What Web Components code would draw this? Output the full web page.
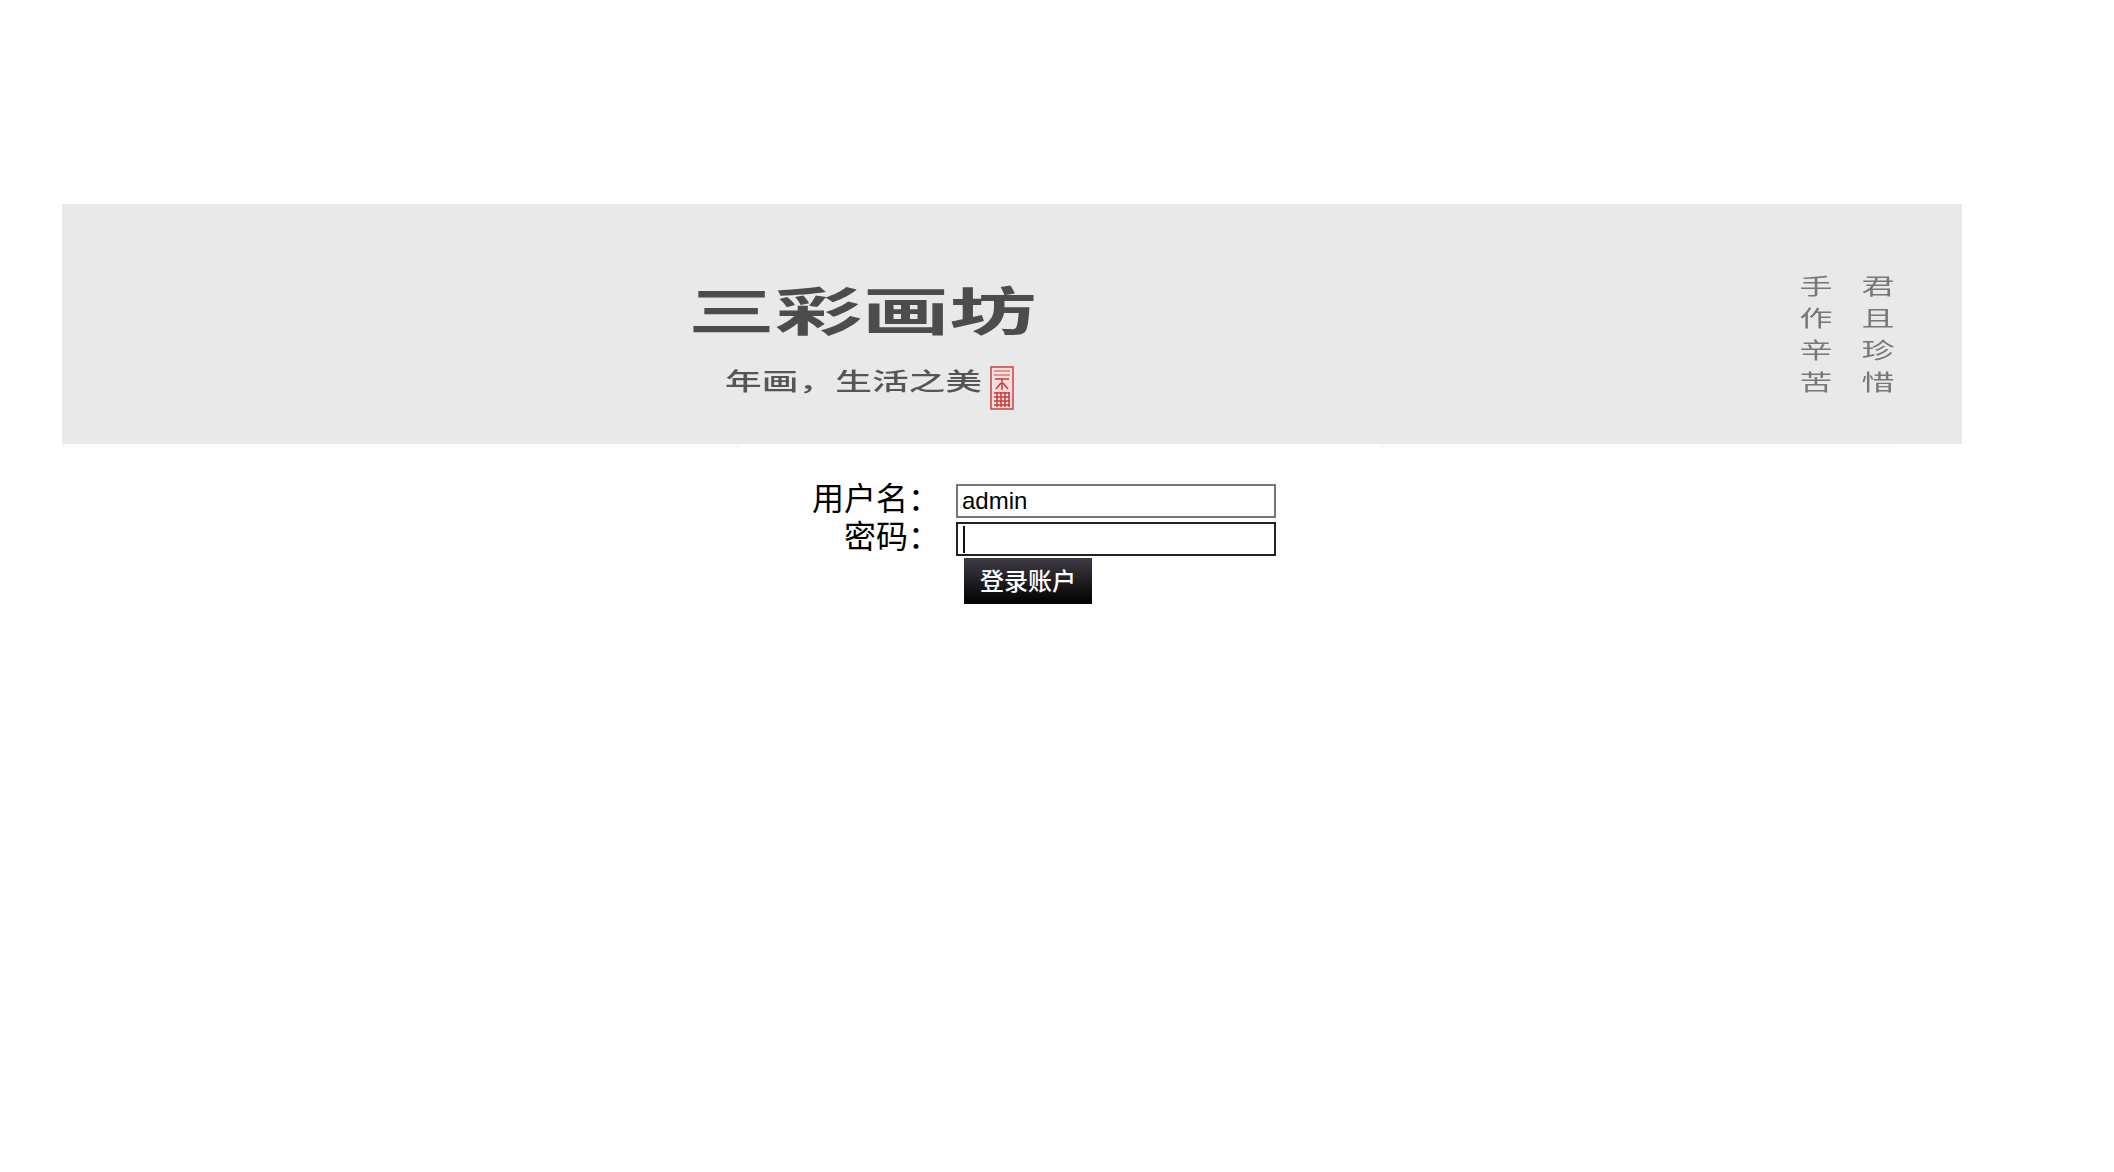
<!DOCTYPE html>
<html lang="zh-CN">
<head>
  <meta charset="UTF-8">
  <title>三彩画坊</title>
  <style>
    body { margin: 0; background: #fff; font-family: "Liberation Sans", "Noto Sans CJK SC", sans-serif; }
  </style>
</head>
<body>
  <shop-banner></shop-banner>
  <login-form></login-form>

  <template id="banner-tpl">
    <style>
      :host { display: block; width: 1900px; height: 240px; margin: 204px 0 0 62px; background: #e9e9e9;
        position: relative; font-family: "Noto Sans CJK SC", sans-serif; }
      .fringe { position: absolute; top: 240px; height: 4px; background: #fafafa; }
      .brand { position: absolute; left: 626px; top: 74px; width: 360px; filter: blur(.4px); }
      .title { display: block; font-size: 52px; line-height: 62px; font-weight: 700; color: #4c4c4c; white-space: nowrap;
        transform: scaleX(1.675); transform-origin: left center; }
      .sub { display: flex; align-items: flex-start; margin: 25px 0 0 37px; }
      .sub span { flex: none; width: 265px; font-size: 24px; line-height: 30px; font-weight: 500; color: #555; white-space: nowrap;
        transform: scaleX(1.53); transform-origin: left center; }
      svg { display: block; flex: none; margin-top: 1px; }
      .verse { position: absolute; left: 1723px; top: 71px; writing-mode: vertical-rl; font-size: 22px; line-height: 62px;
        letter-spacing: 10px; color: #777; height: 128px; filter: blur(.4px); }
      .verse div { transform: scaleX(1.5); }
    </style>
    <div class="brand">
      <span class="title">三彩画坊</span>
      <div class="sub"><span>年画，生活之美</span>
        <svg width="24" height="44" viewBox="0 0 24 44">
          <rect x="1" y="1" width="22" height="42" fill="#f3dede" stroke="#d2494b" stroke-width="1.6"/>
          <path d="M4 5h16M4 9h16" stroke="#d2494b" stroke-width="1.2" fill="none"/>
          <path d="M5 13h14M12 13v11M6 23l5-6M18 23l-5-6M4 27h16M4 31h16M4 35h16M4 39h16M7 26v15M11 26v15M15 26v15M19 26v15" stroke="#cc3a3a" stroke-width="1.5" fill="none"/>
        </svg>
      </div>
    </div>
    <div class="verse"><div>君且珍惜</div><div>手作辛苦</div></div>
    <div class="fringe" style="left:0;width:678px"></div>
    <div class="fringe" style="left:1318px;width:515px"></div>
  </template>

  <template id="form-tpl">
    <style>
      :host { display: grid; grid-template-columns: 878px 320px; column-gap: 16px; row-gap: 4px; margin: 40px 0 0 62px; justify-content: start; }
      label { align-self: start; font-family: "Noto Sans CJK SC", sans-serif; font-size: 32px; line-height: 24px; color: #000; text-align: right; white-space: nowrap; }
      .field { position: relative; height: 34px; }
      input { display: block; box-sizing: border-box; width: 320px; height: 34px; margin: 0; padding: 1px 4px; background: #fff;
        border: 2px solid #767676; border-radius: 0; outline: none; font: 24px "Liberation Sans", sans-serif; color: #000; }
      input.on { border-color: #222; caret-color: transparent; }
      .caret { position: absolute; left: 7px; top: 4px; width: 2px; height: 27px; background: #111; }
      button { grid-column: 2; justify-self: start; width: 128px; height: 46px; margin: -2px 0 0 8px; padding: 0 0 3px; border: 0; color: #fff;
        background: linear-gradient(#403b45, #000); font: 500 24px "Noto Sans CJK SC", sans-serif; }
    </style>
    <label>用户名：</label>
    <div class="field"><input type="text" value="admin"></div>
    <label>密码：</label>
    <div class="field"><input class="on" type="password"><span class="caret"></span></div>
    <button type="button">登录账户</button>
  </template>

  <script>
    class ShopBanner extends HTMLElement {
      connectedCallback() {
        this.attachShadow({ mode: 'open' });
        this.shadowRoot.append(document.querySelector('#banner-tpl').content.cloneNode(true));
      }
    }
    class LoginForm extends HTMLElement {
      connectedCallback() {
        this.attachShadow({ mode: 'open' });
        this.shadowRoot.append(document.querySelector('#form-tpl').content.cloneNode(true));
      }
    }
    customElements.define('shop-banner', ShopBanner);
    customElements.define('login-form', LoginForm);
  </script>
</body>
</html>
